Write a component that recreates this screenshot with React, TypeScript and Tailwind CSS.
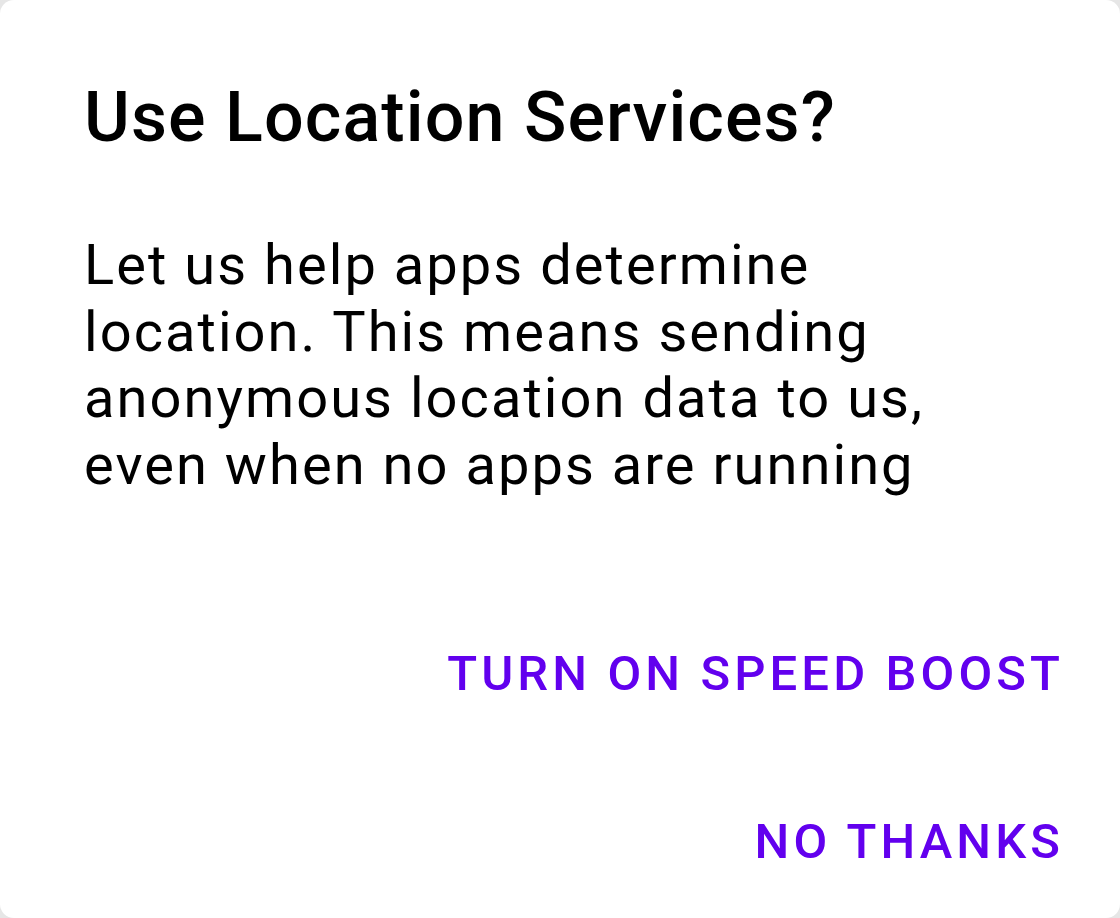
export default function App() {
  return (
    <div className="w-[1120px] h-[918px] bg-[#e6e6e6] font-['Roboto',sans-serif]">
      {/* Dialog */}
      <div className="w-full h-full bg-white rounded-[14px] flex flex-col overflow-hidden">
        <h1 className="mt-[82px] px-[84px] text-[70px] leading-[70px] font-medium tracking-[1.1px] text-black">
          Use Location Services?
        </h1>
        <p className="mt-[80px] px-[84px] text-[56px] leading-[66.5px] tracking-[2.05px] text-black">
          Let us help apps determine location. This means sending anonymous location data to us, even when no apps are running
        </p>

        {/* Stacked actions */}
        <div className="mt-[113px] flex flex-col gap-[42px]">
          <button className="h-[126px] flex items-center justify-end pr-[56px] text-[49px] font-medium tracking-[4.1px] text-[#6200ee]">
            TURN ON SPEED BOOST
          </button>
          <button className="h-[126px] flex items-center justify-end pr-[56px] text-[49px] font-medium tracking-[4.1px] text-[#6200ee]">
            NO THANKS
          </button>
        </div>
      </div>
    </div>
  );
}
